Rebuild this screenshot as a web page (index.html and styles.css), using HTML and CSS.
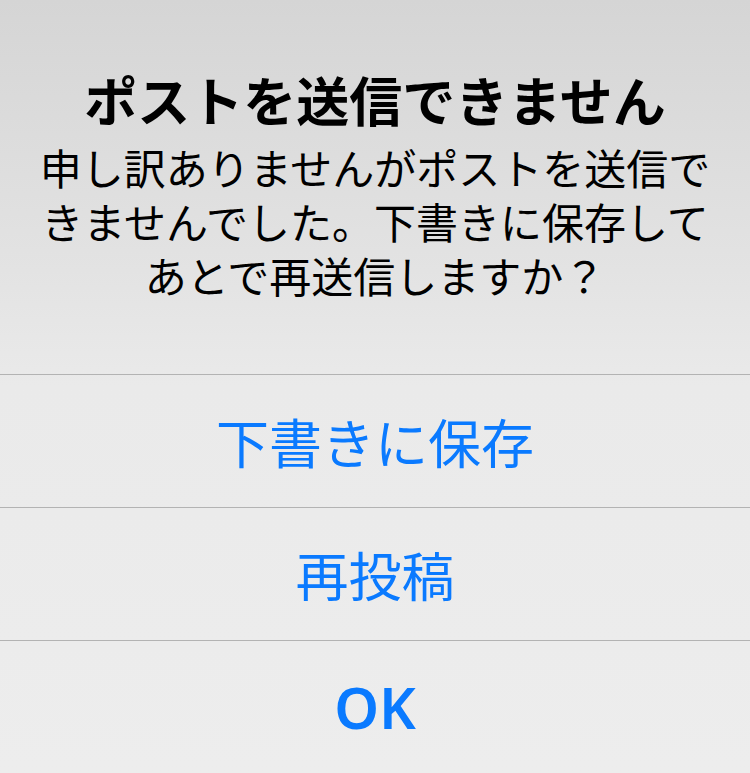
FILE: index.html
```html
<!DOCTYPE html>
<html lang="ja">
<head>
    <meta charset="UTF-8">
    <meta name="viewport" content="width=device-width, initial-scale=1.0">
    <title>ポストを送信できません</title>
    <link rel="stylesheet" href="styles.css">
</head>
<body>
    <div class="alert">
        <div class="alert-body">
            <h1 class="alert-title">ポストを送信できません</h1>
            <p class="alert-message">申し訳ありませんがポストを送信できませんでした。下書きに保存してあとで再送信しますか？</p>
        </div>
        <div class="alert-actions">
            <button class="alert-btn">下書きに保存</button>
            <button class="alert-btn">再投稿</button>
            <button class="alert-btn alert-btn-ok">OK</button>
        </div>
    </div>
</body>
</html>
```

FILE: styles.css
```css
body {
    margin: 0;
    font-family: "Noto Sans CJK JP", sans-serif;
    background-color: #ededed;
}

.alert {
    width: 750px;
    height: 773px;
    display: flex;
    flex-direction: column;
    background: linear-gradient(to bottom, #d5d5d5 0%, #e3e3e3 35%, #eaeaea 50%, #ededed 100%);
    overflow: hidden;
}

.alert-body {
    height: 374px;
    box-sizing: border-box;
    padding: 71px 36px 0;
    text-align: center;
    color: #000;
}

.alert-title {
    margin: 0;
    font-size: 53px;
    line-height: 56px;
    font-weight: 700;
}

.alert-message {
    margin: 13px 0 0;
    font-size: 42px;
    line-height: 54px;
    font-weight: 400;
}

.alert-actions {
    display: flex;
    flex-direction: column;
    flex: 1;
}

.alert-btn {
    height: 133px;
    border: none;
    border-top: 1px solid #b3b3b3;
    background: transparent;
    color: #0a7aff;
    font-family: "Noto Sans CJK JP", sans-serif;
    font-size: 53px;
    padding: 0;
    cursor: pointer;
}

.alert-btn-ok {
    flex: 1;
    font-family: "Noto Sans", "Noto Sans CJK JP", sans-serif;
    font-size: 57px;
    font-weight: 600;
}
```
